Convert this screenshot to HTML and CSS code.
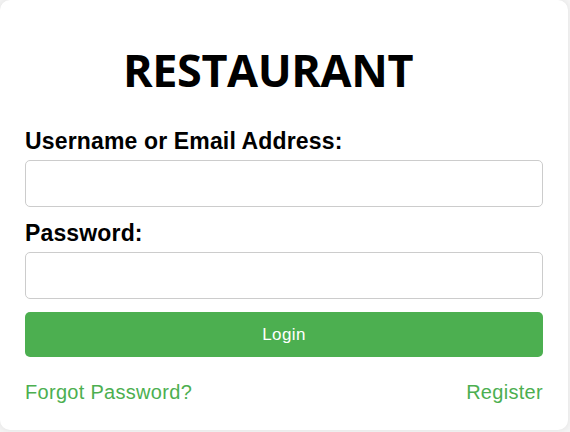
FILE: index.html
```html
<!DOCTYPE html>
<html>
<head>
<meta charset="utf-8">
<link rel="stylesheet" href="styles.css">
</head>
<body>
<div class="card">
  <h1 class="title">RESTAURANT</h1>
  <form class="form">
    <label class="label" for="user">Username or Email Address:</label>
    <input class="input" id="user" type="text">
    <label class="label" for="pass">Password:</label>
    <input class="input" id="pass" type="password">
    <button class="btn" type="button">Login</button>
  </form>
  <div class="links">
    <a class="link" href="#">Forgot Password?</a>
    <a class="link" href="#">Register</a>
  </div>
</div>
</body>
</html>
```
FILE: styles.css
```css
html, body {
  margin: 0;
  padding: 0;
  background: #f4f4f4;
}
body {
  width: 570px;
  height: 432px;
  overflow: hidden;
  font-family: "Liberation Sans", Arial, sans-serif;
}
.card {
  box-sizing: border-box;
  width: 568px;
  height: 430px;
  background: #fff;
  border-radius: 10px;
  box-shadow: 0 0 6px rgba(0,0,0,0.08);
  padding: 0 25px;
  display: flex;
  flex-direction: column;
}
.title {
  margin: 40px 0 0;
  padding-right: 32px;
  text-align: center;
  font-family: "Open Sans", sans-serif;
  font-weight: 700;
  font-size: 45px;
  line-height: 60px;
  color: #000;
  letter-spacing: -0.4px;
}
.form {
  display: flex;
  flex-direction: column;
  margin-top: 28px;
}
.label {
  font-weight: 700;
  font-size: 23px;
  line-height: 26px;
  letter-spacing: 0.15px;
  color: #000;
  margin-bottom: 6px;
}
.input {
  box-sizing: border-box;
  height: 47px;
  border: 1px solid #ccc;
  border-radius: 5px;
  margin: 0 0 13px;
  padding: 0 10px;
  font-size: 16px;
}
.btn {
  height: 45px;
  border: none;
  border-radius: 5px;
  background: #4caf50;
  color: #fff;
  font-family: "Liberation Sans", Arial, sans-serif;
  font-size: 17px;
  letter-spacing: 0.4px;
}
.links {
  display: flex;
  justify-content: space-between;
  margin-top: 23px;
}
.link {
  color: #4caf50;
  text-decoration: none;
  font-size: 20px;
  line-height: 24px;
  letter-spacing: 0.3px;
}
```
